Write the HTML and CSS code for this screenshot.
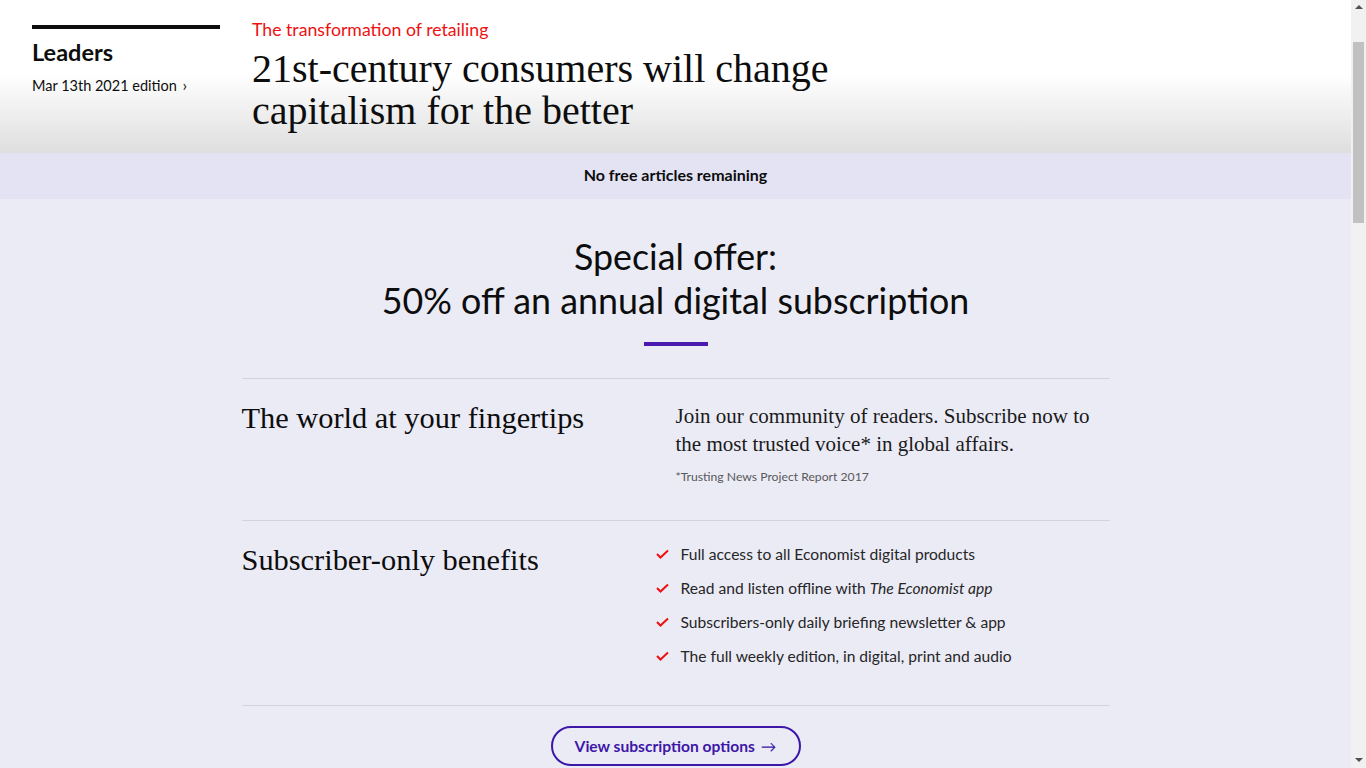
FILE: index.html
```html
<!DOCTYPE html>
<html lang="en">
<head>
<meta charset="utf-8">
<title>21st-century consumers will change capitalism for the better</title>
<link rel="stylesheet" href="styles.css">
</head>
<body>
<div class="page">
<header class="article-head">
  <div class="section-label">
    <h2 class="section-name">Leaders</h2>
    <a class="edition" href="#">Mar 13th 2021 edition <span class="chev">›</span></a>
  </div>
  <div class="headline-block">
    <p class="kicker">The transformation of retailing</p>
    <h1 class="headline">21st-century consumers will change capitalism for the better</h1>
  </div>
</header>
<main class="paywall">
  <div class="banner">No free articles remaining</div>
  <section class="offer">
    <h2 class="offer-title">Special offer:<br>50% off an annual digital subscription</h2>
    <div class="offer-bar"></div>
    <div class="rows">
      <div class="row">
        <h3 class="row-title">The world at your fingertips</h3>
        <div class="row-body">
          <p class="pitch">Join our community of readers. Subscribe now to the most trusted voice* in global affairs.</p>
          <p class="footnote">*Trusting News Project Report 2017</p>
        </div>
      </div>
      <div class="row">
        <h3 class="row-title">Subscriber-only benefits</h3>
        <ul class="benefits">
          <li><svg class="tick" viewBox="0 0 13 10" width="13" height="10"><polyline points="1,5 4.5,8.5 12,1.5" fill="none" stroke="#ee1111" stroke-width="2"/></svg>Full access to all Economist digital products</li>
          <li><svg class="tick" viewBox="0 0 13 10" width="13" height="10"><polyline points="1,5 4.5,8.5 12,1.5" fill="none" stroke="#ee1111" stroke-width="2"/></svg>Read and listen offline with&nbsp;<em>The Economist app</em></li>
          <li><svg class="tick" viewBox="0 0 13 10" width="13" height="10"><polyline points="1,5 4.5,8.5 12,1.5" fill="none" stroke="#ee1111" stroke-width="2"/></svg>Subscribers-only daily briefing newsletter &amp; app</li>
          <li><svg class="tick" viewBox="0 0 13 10" width="13" height="10"><polyline points="1,5 4.5,8.5 12,1.5" fill="none" stroke="#ee1111" stroke-width="2"/></svg>The full weekly edition, in digital, print and audio</li>
        </ul>
      </div>
    </div>
    <div class="cta-wrap">
      <a class="cta" href="#">View subscription options <span class="arrow">→</span></a>
    </div>
  </section>
  <div class="filler"></div>
</main>
</div>
<div class="scrollbar" aria-hidden="true">
  <span class="sb-up"></span>
  <span class="sb-thumb"></span>
  <span class="sb-down"></span>
</div>
</body>
</html>
```
FILE: styles.css
```css
html, body {
  margin: 0;
  padding: 0;
}
body {
  background: #ebebf6;
  color: #0d0d0d;
  font-family: Lato, "Open Sans", sans-serif;
}
.page {
  margin-right: 15px;
}
.article-head {
  display: flex;
  gap: 32px;
  height: 153px;
  box-sizing: border-box;
  padding: 25px 32px 0;
  background: linear-gradient(to bottom, #ffffff 0%, #ffffff 48%, #dedede 100%);
}
.section-label {
  width: 188px;
  flex: none;
  border-top: 4px solid #0d0d0d;
}
.section-name {
  margin: 9px 0 0;
  font-size: 23.5px;
  line-height: 28px;
  font-weight: 700;
}
.edition {
  display: block;
  margin-top: 9px;
  font-size: 14.5px;
  line-height: 20px;
  color: #0d0d0d;
  text-decoration: none;
}
.chev {
  margin-left: 2px;
  font-size: 16px;
}
.headline-block {
  width: 640px;
  margin-top: -7px;
}
.kicker {
  margin: 0;
  color: #ee1111;
  font-size: 17.7px;
  line-height: 24px;
}
.headline {
  margin: 6px 0 0;
  font-family: "Liberation Serif", "DejaVu Serif", serif;
  font-weight: 400;
  font-size: 40px;
  line-height: 42px;
  color: #0d0d0d;
}
.banner {
  height: 46px;
  display: flex;
  align-items: center;
  justify-content: center;
  background: #e3e3f4;
  font-size: 16px;
  font-weight: 700;
  color: #0d0d0d;
  padding-bottom: 3px;
  box-sizing: border-box;
}
.offer {
  width: 868px;
  margin: 0 auto;
  padding-top: 36px;
}
.offer-title {
  margin: 0;
  text-align: center;
  font-weight: 400;
  font-size: 35.8px;
  line-height: 44px;
  color: #0d0d0d;
}
.offer-bar {
  width: 64px;
  height: 4px;
  margin: 19px auto 0;
  background: #4a1ab0;
}
.rows {
  margin-top: 32px;
  border-top: 1px solid #d2d2da;
}
.row {
  display: grid;
  grid-template-columns: 434px 434px;
  padding: 21px 0 33px;
  border-bottom: 1px solid #d2d2da;
}
.row + .row {
  padding-top: 21px;
  padding-bottom: 37px;
}
.row-title {
  margin: 0;
  font-family: "Liberation Serif", "DejaVu Serif", serif;
  font-weight: 400;
  font-size: 30.4px;
  line-height: 36px;
  color: #0d0d0d;
}
.pitch {
  margin: 2px 0 0;
  font-family: "Liberation Serif", "DejaVu Serif", serif;
  font-size: 21px;
  line-height: 28px;
  color: #1a1a1a;
}
.footnote {
  margin: 9px 0 0;
  font-size: 12.2px;
  line-height: 20px;
  color: #595959;
}
.benefits {
  list-style: none;
  margin: 0 0 0 -20px;
  padding: 0;
  display: flex;
  flex-direction: column;
  gap: 10px;
}
.benefits li {
  display: flex;
  align-items: center;
  font-size: 15.6px;
  line-height: 24px;
  color: #262626;
}
.tick {
  flex: none;
  margin-right: 12px;
}
.benefits em {
  font-style: italic;
}
.cta-wrap {
  display: flex;
  justify-content: center;
  padding-top: 20px;
}
.cta {
  display: flex;
  align-items: center;
  justify-content: center;
  width: 250px;
  height: 40px;
  box-sizing: border-box;
  border: 2px solid #3d17a8;
  border-radius: 20px;
  color: #3d17a8;
  font-size: 15.6px;
  font-weight: 700;
  text-decoration: none;
}
.arrow {
  margin-left: 6px;
  font-weight: 400;
}
.filler {
  height: 2300px;
}
.scrollbar {
  position: fixed;
  top: 0;
  right: 0;
  width: 15px;
  height: 100vh;
  background: #f1f1f1;
  display: flex;
  flex-direction: column;
  align-items: center;
}
.sb-up,
.sb-down {
  flex: none;
  width: 0;
  height: 0;
  border-left: 4px solid transparent;
  border-right: 4px solid transparent;
}
.sb-up {
  margin-top: 5px;
  border-bottom: 4px solid #505050;
}
.sb-thumb {
  width: 11px;
  height: 181px;
  margin-top: 33px;
  background: #c1c1c1;
}
.sb-down {
  margin-top: auto;
  margin-bottom: 6px;
  border-top: 4px solid #505050;
}
```
